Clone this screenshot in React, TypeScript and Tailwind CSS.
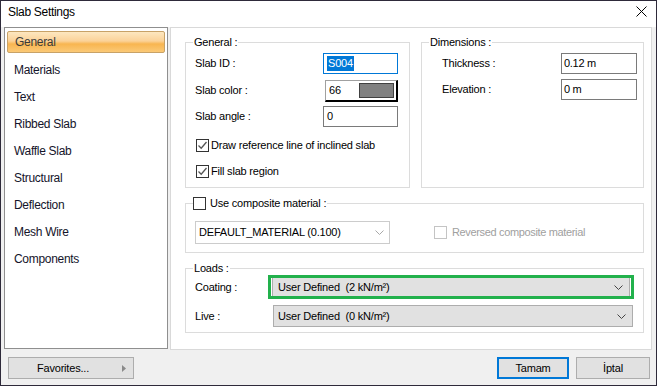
import React from "react";

const navItems = [
  "General",
  "Materials",
  "Text",
  "Ribbed Slab",
  "Waffle Slab",
  "Structural",
  "Deflection",
  "Mesh Wire",
  "Components",
];

const Chevron = ({ color = "#444" }: { color?: string }) => (
  <svg width="9" height="5" viewBox="0 0 9 5" className="shrink-0">
    <path d="M0.5 0.5 L4.5 4.5 L8.5 0.5" fill="none" stroke={color} strokeWidth="1" />
  </svg>
);

const CheckBox = ({ checked, disabled }: { checked?: boolean; disabled?: boolean }) => (
  <span
    className={
      disabled
        ? "w-[13px] h-[13px] border border-[#c4c4c4] bg-white shrink-0"
        : "w-[13px] h-[13px] border border-[#333] bg-white shrink-0 flex items-center justify-center"
    }
  >
    {checked && (
      <svg width="11" height="11" viewBox="0 0 11 11">
        <path d="M1.5 5.5 L4.2 8.2 L9.5 2" fill="none" stroke="#555" strokeWidth="1.3" />
      </svg>
    )}
  </span>
);

const GroupBox = ({
  title,
  className,
  children,
}: {
  title: React.ReactNode;
  className: string;
  children?: React.ReactNode;
}) => (
  <div className={"relative border border-[#dcdcdc] " + className}>
    {/* legend over the top border */}
    <div className="absolute -top-[8px] left-[7px] bg-white px-[1px] h-[15px] flex items-center">{title}</div>
    {children}
  </div>
);

const App = () => {
  return (
    <div
      className="w-[657px] h-[386px] border border-[#2e2a3a] bg-[#f0f0f0] flex flex-col text-[11px] text-black overflow-hidden"
      style={{ fontFamily: '"Liberation Sans", Arial, sans-serif' }}
    >
      {/* title bar */}
      <div className="h-[25px] bg-white flex items-center justify-between pl-[7px] pr-[9px]">
        <span className="text-[12px] tracking-[-0.3px] -mt-[3px]">Slab Settings</span>
        <svg width="11" height="11" viewBox="0 0 11 11" className="-mt-[5px]">
          <path d="M0.5 0.5 L10.5 10.5 M10.5 0.5 L0.5 10.5" stroke="#000" strokeWidth="1" />
        </svg>
      </div>
      <div className="h-[1px] bg-white" />

      <div className="flex pl-[3px] pr-[4px] gap-[2px] h-[323px]">
        {/* left nav */}
        <div className="w-[164px] h-[322px] bg-white border border-[#8f8f8f] pt-[3px] px-[1px] flex flex-col">
          {navItems.map((item, i) =>
            i === 0 ? (
              <div
                key={item}
                className="h-[22px] mb-[3px] mx-[1px] flex items-center pl-[7px] border border-[#c8a267] rounded-[2px] bg-[linear-gradient(#fde7c0,#fbd298_45%,#f8b550_60%,#fbc977)] text-[12px] tracking-[-0.3px] text-[#3a3a3a]"
              >
                {item}
              </div>
            ) : (
              <div key={item} className="h-[27px] flex items-center pl-[8px] text-[12px] tracking-[-0.3px] text-[#14142a]">
                {item}
              </div>
            )
          )}
        </div>

        {/* settings panel */}
        <div className="w-[482px] h-[323px] bg-white border border-[#d9d9d9] pl-[14px] pt-[14px] tracking-[-0.2px]">
          <div className="flex gap-[11px]">
            <GroupBox title={<span>General :</span>} className="w-[225px] h-[146px] pl-[9px] pt-[10px]">
              <div className="flex items-center h-[21px]">
                <span className="w-[128px]">Slab ID :</span>
                <div className="w-[75px] h-[21px] border border-[#0078d7] flex items-center px-[3px]">
                  <span className="bg-[#0078d7] text-white px-[1px] h-[15px] flex items-center">S004</span>
                </div>
              </div>
              <div className="flex items-center h-[21px] mt-[6px]">
                <span className="w-[130px]">Slab color :</span>
                <div className="w-[73px] h-[22px] border-t border-l border-[#a0a0a0] border-r-2 border-b-2 border-r-black border-b-black flex items-center p-[2px]">
                  <span className="w-[31px] pl-[1px]">66</span>
                  <span className="flex-1 h-full bg-[#808080] border border-[#404040]" />
                </div>
              </div>
              <div className="flex items-center h-[21px] mt-[5px]">
                <span className="w-[128px]">Slab angle :</span>
                <div className="w-[75px] h-[21px] border border-[#7a7a7a] flex items-center px-[3px]">0</div>
              </div>
              <div className="flex items-center gap-[2px] pl-[1px] mt-[12px] h-[13px]">
                <CheckBox checked />
                <span>Draw reference line of inclined slab</span>
              </div>
              <div className="flex items-center gap-[2px] pl-[1px] mt-[13px] h-[13px]">
                <CheckBox checked />
                <span>Fill slab region</span>
              </div>
            </GroupBox>

            <GroupBox title={<span>Dimensions :</span>} className="w-[223px] h-[146px] pl-[20px] pt-[10px]">
              <div className="flex items-center h-[21px]">
                <span className="w-[119px]">Thickness :</span>
                <div className="w-[76px] h-[21px] border border-[#7a7a7a] flex items-center px-[2px] tracking-[-0.3px]">0.12 m</div>
              </div>
              <div className="flex items-center h-[21px] mt-[5px]">
                <span className="w-[119px]">Elevation :</span>
                <div className="w-[76px] h-[21px] border border-[#7a7a7a] flex items-center px-[2px] tracking-[-0.3px]">0 m</div>
              </div>
            </GroupBox>
          </div>

          <GroupBox
            title={
              <span className="flex items-center gap-[4px] -ml-[1px]">
                <CheckBox />
                <span>Use composite material :</span>
              </span>
            }
            className="w-[459px] h-[50px] mt-[15px] pl-[9px] pt-[17px]"
          >
            <div className="flex items-center">
              <div className="w-[195px] h-[23px] border border-[#cccccc] flex items-center justify-between pl-[3px] pr-[5px]">
                <span>DEFAULT_MATERIAL (0.100)</span>
                <Chevron color="#a8a8a8" />
              </div>
              <div className="flex items-center gap-[5px] ml-[44px] text-[#a0a0a0] tracking-[-0.35px]">
                <CheckBox disabled />
                <span>Reversed composite material</span>
              </div>
            </div>
          </GroupBox>

          <GroupBox title={<span>Loads :</span>} className="w-[459px] h-[65px] mt-[15px] pl-[9px] pt-[6px]">
            <div className="flex items-center h-[24px]">
              <span className="w-[73px]">Coating :</span>
              <div className="w-[366px] h-[24px] border-[3px] border-[#22b14c] p-0">
                <div className="h-full mx-[1px] border-x border-[#adadad] bg-[#e1e1e1] flex items-center justify-between pl-[5px] pr-[6px]">
                  <span>User Defined&nbsp; (2 kN/m²)</span>
                  <Chevron />
                </div>
              </div>
            </div>
            <div className="flex items-center h-[22px] mt-[6px]">
              <span className="w-[78px]">Live :</span>
              <div className="w-[360px] h-[22px] border border-[#adadad] bg-[#e1e1e1] flex items-center justify-between pl-[4px] pr-[6px]">
                <span>User Defined&nbsp; (0 kN/m²)</span>
                <Chevron />
              </div>
            </div>
          </GroupBox>
        </div>
      </div>

      {/* footer buttons */}
      <div className="flex items-center mt-[7px] pl-[7px] pr-[6px] h-[22px] tracking-[-0.2px]">
        <button className="w-[126px] h-[22px] border border-[#adadad] bg-[#e1e1e1] flex items-center pl-[28px] pr-[7px] justify-between">
          <span>Favorites...</span>
          <svg width="4" height="7" viewBox="0 0 4 7">
            <path d="M0 0 L4 3.5 L0 7 Z" fill="#8a8a8a" />
          </svg>
        </button>
        <div className="flex-1" />
        <button className="w-[72px] h-[22px] border-2 border-[#0078d7] bg-[#e1e1e1] flex items-center justify-center">Tamam</button>
        <button className="w-[74px] h-[22px] ml-[7px] border border-[#adadad] bg-[#e1e1e1] flex items-center justify-center">İptal</button>
      </div>
    </div>
  );
};

export default App;
